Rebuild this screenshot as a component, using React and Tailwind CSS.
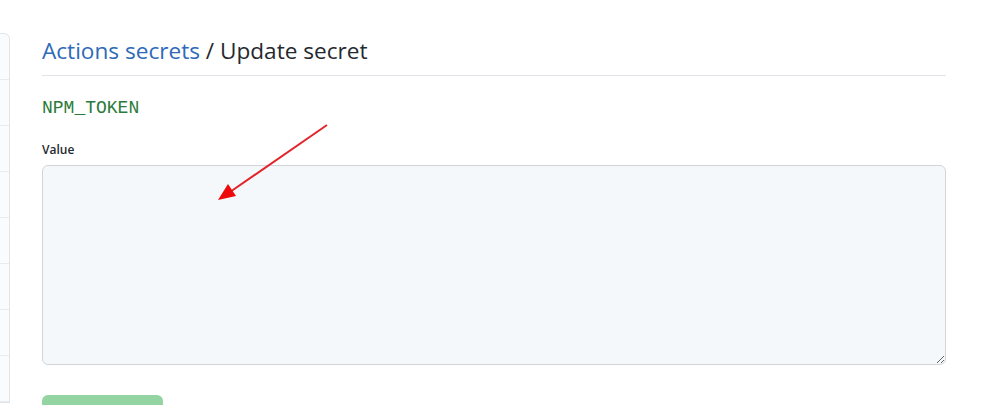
import React from 'react';

// Sidebar menu stub (only its right edge is visible in the shot)
function SideMenu() {
    const rows = [0, 1, 2, 3, 4, 5, 6, 7];
    return (
        <div className="w-[10px] mt-[33px] shrink-0 self-start border border-l-0 border-[#e1e4e8] rounded-tr-md bg-[#fafbfc]">
            {rows.map(i => (
                <div key={i} className={`h-[46px] ${i === 0 ? 'h-[45px]' : ''} border-b border-[#e8ebef]`} />
            ))}
        </div>
    );
}

function App() {
    return (
        <div className="relative w-[1008px] h-[405px] overflow-hidden bg-white" style={{ fontFamily: '"Open Sans", "Noto Sans", sans-serif' }}>
            <div className="flex">
                <SideMenu />
                <div className="ml-[32px] w-[904px] pt-[34px]">
                    {/* Title */}
                    <div className="pb-[7px] border-b border-[#e1e4e8]">
                        <h2 className="text-[22.6px] leading-[34px] text-[#24292e]">
                            <a className="text-[#2e6ab8]">Actions secrets</a> / Update secret
                        </h2>
                    </div>

                    {/* Secret name */}
                    <div className="mt-[20px] text-[18px] leading-[24px] text-[#2b7a3a]" style={{ fontFamily: '"Liberation Mono", "DejaVu Sans Mono", monospace' }}>
                        NPM_TOKEN
                    </div>

                    {/* Value field */}
                    <label className="block mt-[21px] text-[12px] font-semibold leading-[18px] text-[#24292e]">Value</label>
                    <textarea className="block mt-[6px] w-[904px] h-[200px] rounded-md border border-[#d1d5da] bg-[#f5f8fb] resize-y" />

                    <button className="mt-[30px] w-[121px] h-[36px] rounded-md bg-[#94d3a2] text-white text-sm font-semibold">
                        Update secret
                    </button>
                </div>
            </div>

            {/* Annotation arrow */}
            <svg className="absolute left-0 top-0 pointer-events-none" width="1008" height="405">
                <line x1="327" y1="125" x2="230" y2="192" stroke="#e0262b" strokeWidth="2" />
                <polygon points="218,200 228,184 236,196" fill="#ee0a0a" />
            </svg>
        </div>
    );
}

export default App;
